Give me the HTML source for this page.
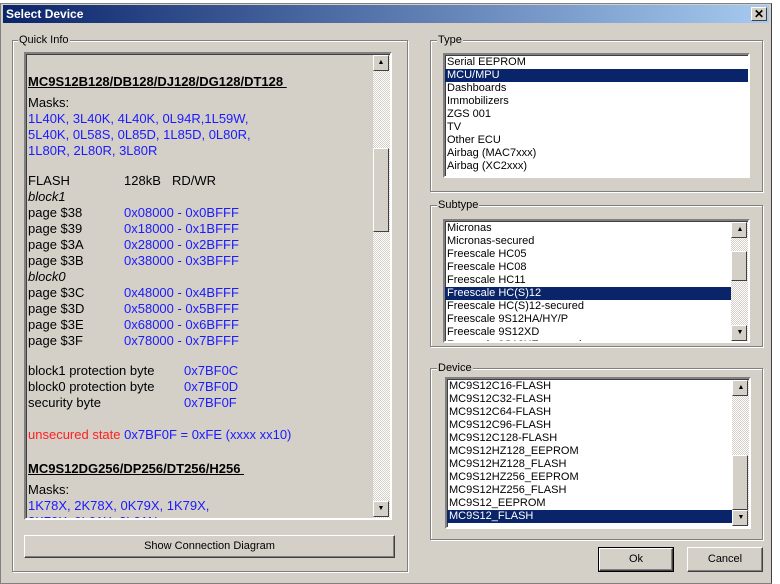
<!DOCTYPE html><html><head><style>
*{margin:0;padding:0;box-sizing:border-box}
body{width:780px;height:584px;background:#fff;position:relative;overflow:hidden;font-family:"Liberation Sans",sans-serif}
.a{position:absolute}
.win{left:0;top:3px;width:772px;height:581px;background:#d4d0c8;border:1px solid #808080;border-right-color:#404040}
.title{left:3px;top:5px;width:766px;height:18px;background:linear-gradient(90deg,#0a246a,#a6caf0);color:#fff;font-weight:bold;font-size:12px;line-height:18px;padding-left:3px}
.x{left:751px;top:7px;width:16px;height:14px;background:#d4d0c8;border:1px solid;border-color:#fff #404040 #404040 #fff;font-size:12px;line-height:12px;text-align:center;font-weight:bold;color:#000}
.grp{border:1px solid #808080;box-shadow:1px 1px 0 #fff inset,1px 1px 0 #fff}
.lg{font-size:11px;background:#d4d0c8;padding:0 1px;line-height:12px;color:#000}
.lb{background:#fff;border:2px solid;border-color:#808080 #fff #fff #808080;box-shadow:inset 1px 1px 0 #404040;overflow:hidden;font-size:11px;line-height:13px}
.lb div{padding-left:2px;white-space:nowrap}
.sel{background:#0a246a;color:#fff}
.sb{background:repeating-conic-gradient(#fff 0 25%,#d4d0c8 0 50%) 0 0/2px 2px}
.btn{background:#d4d0c8;border:1px solid;border-color:#fff #404040 #404040 #fff;box-shadow:inset -1px -1px 0 #808080;font-size:11px;text-align:center}
.arr{width:16px;height:16px;background:#d4d0c8;border:1px solid;border-color:#fff #404040 #404040 #fff;font-size:7px;line-height:14px;text-align:center}
.qi{font-size:13px;line-height:16px;color:#000}
.qi .b{color:#1a1aff}
.qi .r{color:#ff2020}
.qi .h{font-weight:bold;text-decoration:underline}
</style></head><body>
<div class="a win"></div>
<div class="a title">Select Device</div>
<div class="a x">✕</div>

<div class="a grp" style="left:12px;top:40px;width:396px;height:532px"></div>
<div class="a lg" style="left:18px;top:34px">Quick Info</div>
<div class="a" style="left:24px;top:52px;width:368px;height:468px;border:2px solid;border-color:#808080 #fff #fff #808080;box-shadow:inset 1px 1px 0 #404040;overflow:hidden">
<div class="a qi" style="left:2px;top:20px;width:345px">
<div class="h" style="margin-bottom:5px">MC9S12B128/DB128/DJ128/DG128/DT128&nbsp;</div>
<div>Masks:</div>
<div class="b">1L40K, 3L40K, 4L40K, 0L94R,1L59W,<br>5L40K, 0L58S, 0L85D, 1L85D, 0L80R,<br>1L80R, 2L80R, 3L80R</div>
<div style="height:14px"></div>
<div>FLASH<span class="a" style="left:96px">128kB</span><span class="a" style="left:144px">RD/WR</span></div>
<div><i>block1</i></div>
<div>
<div>page $38<span class="a b" style="left:96px">0x08000 - 0x0BFFF</span></div>
<div>page $39<span class="a b" style="left:96px">0x18000 - 0x1BFFF</span></div>
<div>page $3A<span class="a b" style="left:96px">0x28000 - 0x2BFFF</span></div>
<div>page $3B<span class="a b" style="left:96px">0x38000 - 0x3BFFF</span></div>
<div><i>block0</i></div>
<div>page $3C<span class="a b" style="left:96px">0x48000 - 0x4BFFF</span></div>
<div>page $3D<span class="a b" style="left:96px">0x58000 - 0x5BFFF</span></div>
<div>page $3E<span class="a b" style="left:96px">0x68000 - 0x6BFFF</span></div>
<div>page $3F<span class="a b" style="left:96px">0x78000 - 0x7BFFF</span></div>
</div>
<div style="height:14px"></div>
<div>block1 protection byte<span class="a b" style="left:156px">0x7BF0C</span></div>
<div>block0 protection byte<span class="a b" style="left:156px">0x7BF0D</span></div>
<div>security byte<span class="a b" style="left:156px">0x7BF0F</span></div>
<div style="height:16px"></div>
<div><span class="r">unsecured state</span> <span class="b">0x7BF0F = 0xFE (xxxx xx10)</span></div>
<div style="height:18px"></div>
<div class="h" style="margin-bottom:5px">MC9S12DG256/DP256/DT256/H256&nbsp;</div>
<div>Masks:</div>
<div class="b">1K78X, 2K78X, 0K79X, 1K79X,<br>2K79X, 0L01X, 3L01N</div>
</div>
<div class="a sb" style="left:347px;top:1px;width:17px;height:464px"></div>
<div class="a arr" style="left:347px;top:1px">▲</div>
<div class="a arr" style="left:347px;top:94px;height:84px"></div>
<div class="a arr" style="left:347px;top:447px">▼</div>
</div>
<div class="a btn" style="left:24px;top:535px;width:371px;height:23px;line-height:21px">Show Connection Diagram</div>

<div class="a grp" style="left:430px;top:40px;width:333px;height:152px"></div>
<div class="a lg" style="left:437px;top:34px">Type</div>
<div class="a lb" style="left:443px;top:53px;width:307px;height:125px;padding-top:1px">
<div>Serial EEPROM</div><div class="sel">MCU/MPU</div><div>Dashboards</div><div>Immobilizers</div><div>ZGS 001</div><div>TV</div><div>Other ECU</div><div>Airbag (MAC7xxx)</div><div>Airbag (XC2xxx)</div>
</div>

<div class="a grp" style="left:430px;top:205px;width:333px;height:142px"></div>
<div class="a lg" style="left:437px;top:199px">Subtype</div>
<div class="a lb" style="left:443px;top:219px;width:307px;height:124px;padding-top:1px">
<div>Micronas</div><div>Micronas-secured</div><div>Freescale HC05</div><div>Freescale HC08</div><div>Freescale HC11</div><div class="sel" style="width:287px">Freescale HC(S)12</div><div>Freescale HC(S)12-secured</div><div>Freescale 9S12HA/HY/P</div><div>Freescale 9S12XD</div><div>Freescale 9S12XE-secured</div>
<div class="a sb" style="left:286px;top:1px;width:17px;height:119px"></div>
<div class="a arr" style="left:286px;top:1px">▲</div>
<div class="a arr" style="left:286px;top:30px;height:30px"></div>
<div class="a arr" style="left:286px;top:104px">▼</div>
</div>

<div class="a grp" style="left:430px;top:368px;width:333px;height:172px"></div>
<div class="a lg" style="left:437px;top:362px">Device</div>
<div class="a lb" style="left:445px;top:377px;width:306px;height:152px;padding-top:1px;line-height:13px">
<div>MC9S12C16-FLASH</div><div>MC9S12C32-FLASH</div><div>MC9S12C64-FLASH</div><div>MC9S12C96-FLASH</div><div>MC9S12C128-FLASH</div><div>MC9S12HZ128_EEPROM</div><div>MC9S12HZ128_FLASH</div><div>MC9S12HZ256_EEPROM</div><div>MC9S12HZ256_FLASH</div><div>MC9S12_EEPROM</div><div class="sel" style="width:285px">MC9S12_FLASH</div>
<div class="a sb" style="left:285px;top:1px;width:17px;height:146px"></div>
<div class="a arr" style="left:285px;top:1px">▲</div>
<div class="a arr" style="left:285px;top:76px;height:55px"></div>
<div class="a arr" style="left:285px;top:131px">▼</div>
</div>

<div class="a" style="left:598px;top:547px;width:76px;height:25px;border:1px solid #000"><div class="btn" style="width:74px;height:23px;line-height:21px">Ok</div></div>
<div class="a btn" style="left:687px;top:547px;width:76px;height:25px;line-height:23px">Cancel</div>
</body></html>
